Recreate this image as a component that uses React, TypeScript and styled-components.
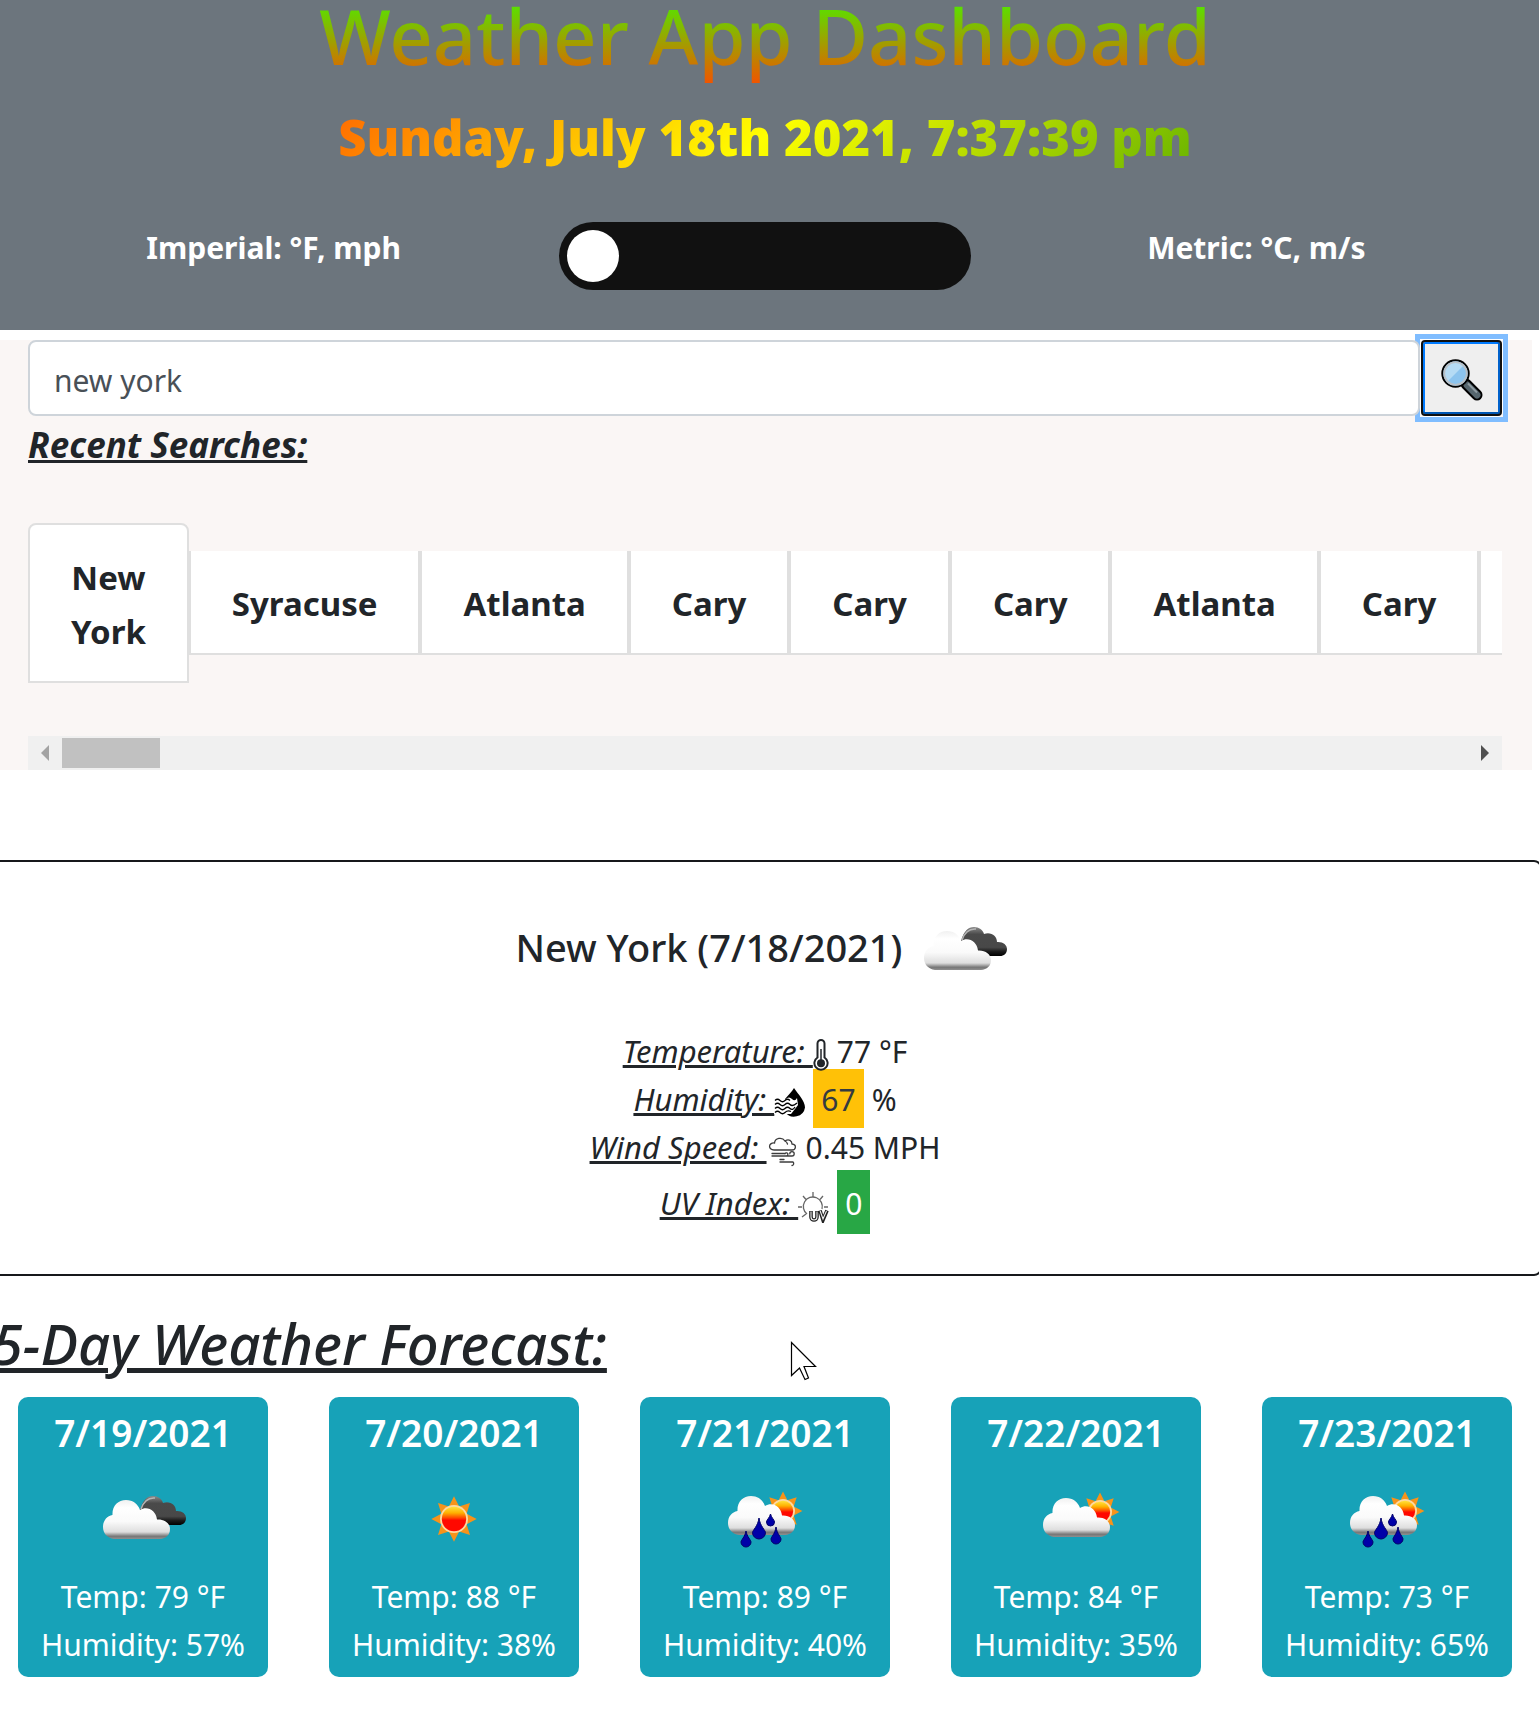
import React, { useId, useRef, useState } from 'react';
import styled, { createGlobalStyle, css } from 'styled-components';

const GlobalStyle = createGlobalStyle`
  *, *::before, *::after { box-sizing: border-box; }
  body {
    margin: 0;
    background: #fff;
    color: #212529;
    font-family: 'Segoe UI', 'Noto Sans', 'Open Sans', sans-serif;
    font-size: 30px;
    line-height: 48px;
  }
  h1, h2, h3, p, ul, dl, dd { margin: 0; padding: 0; }
  h1, h2, h3 { font-weight: 500; }
  button, input { font-family: inherit; }
`;

const Page = styled.div`
  position: relative;
  overflow-x: clip;
`;

/* ---------- header ---------- */

const Header = styled.header`
  padding: 0 37px 40px 28px;
  background: #6c757d;
  text-align: center;
`;

const gradientText = css`
  -webkit-background-clip: text;
  background-clip: text;
  color: transparent;
`;

const Title = styled.h1`
  padding-bottom: 16px;
  font-size: 76px;
  line-height: 72px;
  background-image: linear-gradient(#4eeb00, #fa4c00);
  ${gradientText}
`;

const Clock = styled.p`
  font-size: 49px;
  font-weight: 900;
  line-height: 98px;
  background-image: linear-gradient(135deg, red, yellow, green);
  ${gradientText}
`;

const UnitBar = styled.div`
  display: grid;
  grid-template-columns: repeat(3, 1fr);
  justify-items: center;
  margin-top: 36px;
`;

const UnitLabel = styled.label`
  color: #fff;
  font-weight: 700;
  line-height: 52px;
`;

const Switch = styled.input`
  appearance: none;
  width: 84%;
  height: 68px;
  margin: 0;
  padding: 8px;
  border-radius: 34px;
  background: #111;
  display: flex;
  cursor: pointer;

  &::before {
    content: '';
    width: 52px;
    height: 52px;
    border-radius: 50%;
    background: #fff;
  }

  &:checked { justify-content: flex-end; }
`;

/* ---------- search ---------- */

const SearchPanel = styled.section`
  margin: 10px 7px 0 0;
  padding: 0 30px 0 28px;
  background: #faf6f5;
`;

const SearchForm = styled.form`
  display: flex;
`;

const SearchInput = styled.input`
  position: relative;
  z-index: 1;
  flex: 1;
  min-width: 0;
  height: 76px;
  padding: 4px 24px 0;
  border: 2px solid #ced4da;
  border-radius: 8px;
  background: #fff;
  color: #495057;
  font-size: 30px;
  outline: none;
`;

const SearchButton = styled.button`
  position: relative;
  display: flex;
  align-items: center;
  justify-content: center;
  width: 81px;
  margin-left: 1px;
  padding: 4px 0 0;
  border: 2px solid #101010;
  border-radius: 4px;
  background: #efefef;
  box-shadow: inset 0 -2px #0056b3, inset -2px 0 #0062cc, inset 0 0 0 2px #007bff, 0 0 0 1px #fff;

  &::before {
    content: '';
    position: absolute;
    inset: -8px;
    border: 5px solid #80bdff;
  }
`;

const RecentTitle = styled.h2`
  font-size: 35px;
  font-style: italic;
  font-weight: 700;
  line-height: 58px;
  text-decoration: underline 3px;
  text-underline-offset: 2px;
`;

const RecentList = styled.ul`
  display: flex;
  align-items: center;
  margin: 49px 0 53px;
  overflow: hidden;
  list-style: none;
`;

const City = styled.button<{ $first?: boolean }>`
  display: block;
  width: min-content;
  padding: 26px 41px 22px;
  border: 2px solid #dfdfdf;
  border-top-width: ${p => (p.$first ? 2 : 0)}px;
  border-radius: ${p => (p.$first ? '8px 8px 0 0' : 0)};
  background: #fff;
  color: #212529;
  font-size: 33px;
  font-weight: 700;
  line-height: 54px;
`;

const ScrollTrack = styled.div`
  display: flex;
  align-items: center;
  height: 34px;
  background: #f0f0f0;
`;

const ScrollArrow = styled.button<{ $right?: boolean }>`
  display: flex;
  align-items: center;
  justify-content: center;
  width: 34px;
  height: 34px;
  margin-left: ${p => (p.$right ? 'auto' : 0)};
  padding: 0;
  border: 0;
  background: none;
  color: ${p => (p.$right ? '#505050' : '#a3a3a3')};
`;

const ScrollThumb = styled.div`
  width: 98px;
  height: 30px;
  background: #c1c1c1;
`;

/* ---------- current weather ---------- */

const Current = styled.section`
  margin: 90px -3px 0 -12px;
  padding: 38px 0 39px;
  border: 2px solid #16181b;
  border-radius: 8px;
`;

const CurrentHead = styled.div`
  display: flex;
  align-items: center;
  justify-content: center;
  gap: 12px;
  margin-bottom: 27px;
`;

const CityName = styled.h2`
  padding-bottom: 6px;
  font-size: 38px;
`;

const WeatherSvg = styled.svg`
  display: block;
  width: 100px;
  height: 100px;
`;

const Reading = styled.div<{ $tall?: boolean }>`
  display: flex;
  align-items: center;
  justify-content: center;
  height: ${p => (p.$tall ? 64 : 48)}px;
`;

const Term = styled.dt`
  font-size: 31px;
  font-style: italic;
  white-space: pre;
  text-decoration: underline 3px;
  text-underline-offset: 2px;
`;

const Value = styled.dd`
  display: flex;
  align-items: center;
  gap: 8px;
`;

const Figure = styled.span`
  padding-top: 2px;
`;

const ReadingSvg = styled.svg<{ $narrow?: boolean }>`
  position: relative;
  z-index: 1;
  width: ${p => (p.$narrow ? 16 : 31)}px;
  height: 32px;
  margin-top: 8px;
`;

const Badge = styled.span<{ $tone: 'warn' | 'good' }>`
  margin-bottom: 2px;
  padding: 3px 8px 0;
  line-height: ${p => (p.$tone === 'good' ? 61 : 56)}px;
  background: ${p => (p.$tone === 'good' ? '#28a745' : '#ffc107')};
  color: ${p => (p.$tone === 'good' ? '#fff' : '#343a40')};
`;

/* ---------- forecast ---------- */

const Forecast = styled.section`
  margin: 32px -3px 0 -12px;
  padding-bottom: 32px;
`;

const ForecastTitle = styled.h2`
  margin-bottom: 19px;
  padding-left: 4px;
  font-size: 56px;
  font-style: italic;
  line-height: 70px;
  text-decoration: underline 5px;
  text-underline-offset: 3px;
`;

const Days = styled.div`
  display: grid;
  grid-template-columns: repeat(5, 1fr);
  gap: 61px;
  padding: 0 30px;
`;

const Day = styled.article`
  display: flex;
  flex-direction: column;
  align-items: center;
  padding: 12px 0 8px;
  border-radius: 10px;
  background: #17a2b8;
  color: #fff;
  white-space: nowrap;
`;

const DayDate = styled.h3`
  font-size: 37px;
  font-weight: 600;
`;

const DayIcon = styled.div`
  margin: 12px 0 4px;
`;

const DayLine = styled.p`
  font-weight: 400;
`;

const Pointer = styled.svg`
  position: absolute;
  left: 790px;
  top: 1341px;
  width: 27px;
  height: 40px;
  pointer-events: none;
`;

/* ---------- drawings ---------- */

type Sky = 'clouds' | 'sun' | 'rain' | 'partly';

const spikes = (cx: number, cy: number, inner: number, outer: number) =>
  Array.from({ length: 8 }, (_, i) => {
    const a = (i * Math.PI) / 4;
    const point = (r: number, t: number) =>
      `${(cx + r * Math.cos(t)).toFixed(1)},${(cy + r * Math.sin(t)).toFixed(1)}`;
    return `M${point(outer, a)} L${point(inner, a + 0.36)} L${point(inner, a - 0.36)}Z`;
  }).join(' ');

function Sun({ id, cx, cy, r }: { id: string; cx: number; cy: number; r: number }) {
  return (
    <g>
      <linearGradient id={`${id}-s`} x1="0" y1="0" x2="0" y2="1">
        <stop offset="0" stopColor="#ffe23c" />
        <stop offset="0.25" stopColor="#ffb000" />
        <stop offset="0.45" stopColor="#ff4a00" />
        <stop offset="0.55" stopColor="#ff0800" />
        <stop offset="1" stopColor="#ff0800" />
      </linearGradient>
      <path d={spikes(cx, cy, r, r * 1.62)} fill="#f7931a" />
      <circle cx={cx} cy={cy} r={r} fill="#ffd9a0" />
      <circle cx={cx} cy={cy} r={r - 1.8} fill={`url(#${id}-s)`} />
    </g>
  );
}

function Cloud({ id, dx, dy }: { id: string; dx: number; dy: number }) {
  return (
    <g transform={`translate(${dx} ${dy})`}>
      <linearGradient id={`${id}-c`} gradientUnits="userSpaceOnUse" x1="0" y1="31" x2="0" y2="70">
        <stop offset="0" stopColor="#f1f1f1" />
        <stop offset="0.2" stopColor="#ffffff" />
        <stop offset="0.55" stopColor="#fafafa" />
        <stop offset="0.82" stopColor="#dedede" />
        <stop offset="0.87" stopColor="#b0b0b0" />
        <stop offset="0.93" stopColor="#777777" />
        <stop offset="1" stopColor="#8f8f8f" />
      </linearGradient>
      <path
        d="M21 70 C14 69 10 64 10 58 C10 51.500 14 47 19.500 46 C19 37 25 31 33 31 C40 31 45 35 47 41 C54 36.500 63 41 64 50.500 C71 50 77 54 77 60 C77 66 73 69.500 67 70 Z"
        fill={`url(#${id}-c)`}
      />
    </g>
  );
}

const drop = (x: number, top: number, bottom: number, w: number) => {
  const r = w / 2;
  const mid = bottom - r;
  return `M${x} ${top} C${x + 1} ${mid - r} ${x + r} ${mid - 2} ${x + r} ${mid} A${r} ${r} 0 0 1 ${x - r} ${mid} C${x - r} ${mid - 2} ${x - 1} ${mid - r} ${x} ${top}Z`;
};

const cloudShift: Record<Sky, [number, number]> = {
  clouds: [0, 0],
  sun: [0, 0],
  rain: [3, -4],
  partly: [7, -2],
};

function WeatherIcon({ sky, label }: { sky: Sky; label: string }) {
  const id = useId().replace(/[^a-zA-Z0-9]/g, '');
  return (
    <WeatherSvg viewBox="0 0 100 100" role="img" aria-label={label}>
      {sky === 'clouds' && (
        <g>
          <linearGradient id={`${id}-d`} gradientUnits="userSpaceOnUse" x1="0" y1="27" x2="0" y2="56">
            <stop offset="0" stopColor="#8a8a8a" />
            <stop offset="0.25" stopColor="#4a4a4a" />
            <stop offset="0.7" stopColor="#484848" />
            <stop offset="0.85" stopColor="#1a1a1a" />
            <stop offset="1" stopColor="#000000" />
          </linearGradient>
          <path
            d="M56 56 C50 54 44 46 47 41 C50 31 54 27 60 27 C65 27 69 30 70 34 C77 31.500 83 36 83 42 C89 41.500 93 45 93 49 C93 53.500 90 56 86 56 Z"
            fill={`url(#${id}-d)`}
          />
          <path d="M48 40 C51 31 56 28.500 62 29" fill="none" stroke="#b5b5b5" strokeWidth="1.500" />
        </g>
      )}
      {sky === 'sun' && <Sun id={id} cx={50} cy={50} r={14} />}
      {sky === 'rain' && <Sun id={id} cx={68} cy={42} r={12} />}
      {sky === 'partly' && <Sun id={id} cx={74} cy={43} r={12} />}
      {sky !== 'sun' && <Cloud id={id} dx={cloudShift[sky][0]} dy={cloudShift[sky][1]} />}
      {sky === 'rain' && (
        <path
          d={[drop(31, 62, 78, 10), drop(44, 49, 70, 13), drop(55.5, 45, 57, 8), drop(61, 58, 75, 10)].join(' ')}
          fill="#0000a8"
          stroke="#00006a"
          strokeWidth="1"
        />
      )}
    </WeatherSvg>
  );
}

function MagnifierIcon() {
  return (
    <svg width="42" height="42" viewBox="0 0 42 42" aria-hidden="true">
      <path d="M25 25 L36 36" stroke="#000" strokeWidth="11" strokeLinecap="round" />
      <path d="M26 26 L36 36" stroke="#56666e" strokeWidth="7" strokeLinecap="round" />
      <path d="M27 24.500 L36 33.500" stroke="#8e9ba1" strokeWidth="2" />
      <circle cx="14.500" cy="14.500" r="13.200" fill="#8cc4ee" stroke="#000" strokeWidth="2" />
      <path d="M6.500 22.500 A11.300 11.300 0 0 1 22.500 6.500 Z" fill="#b5dbf4" />
      <circle cx="14.500" cy="14.500" r="11.300" fill="none" stroke="#b9c0c6" strokeWidth="1.800" />
    </svg>
  );
}

const Thermometer = () => (
  <ReadingSvg $narrow viewBox="0 0 16 32" aria-hidden="true">
    <path d="M4.500 18.500 V4.500 a3.500 3.500 0 0 1 7 0 V18.500 a6.600 6.600 0 1 1 -7 0 Z" fill="#fff" stroke="#212529" strokeWidth="2" />
    <path d="M8 10 V24" stroke="#212529" strokeWidth="1.500" />
    <circle cx="8" cy="24.300" r="4" fill="#212529" />
  </ReadingSvg>
);

const HumidityIcon = () => (
  <ReadingSvg viewBox="0 0 31 32" aria-hidden="true">
    <path d="M20 1 C24 7 31 14 31 20.500 A11 10.500 0 0 1 11 25 L11 12 C14 8 18 5 20 1Z" fill="#000" />
    <path d="M0 12 q3 -3 6 0 t6 0 t6 0 t5 -1 L24 18 L21 22 L17 27 H0Z" fill="#fff" />
    <path
      d="M1 13.500 q2.500 -2.500 5 0 t5 0 t5 0 M1 17.500 q2.500 -2.500 5 0 t5 0 t5 0 t7 -1.500 M1 21.500 q2.500 -2.500 5 0 t5 0 t5 0 t5 -1.500 M1 25.500 q2.500 -2.500 5 0 t5 0 t6 -1"
      fill="none"
      stroke="#000"
      strokeWidth="1.300"
    />
  </ReadingSvg>
);

const WindIcon = () => (
  <ReadingSvg viewBox="0 0 31 32" aria-hidden="true">
    <g fill="none" stroke="#3c3c3c" strokeWidth="1.300" strokeLinecap="round">
      <path d="M7 15 C1 15 1 7.500 7.500 8 C8 3 15 1.500 18 6 C22 3.500 25 6 25 9 C30 9.500 29 15 25 15 Z M18 6 Q20 7 20.500 9" />
      <path d="M5 18.500 H18 M5 21 H25 a2.200 2.200 0 1 0 -2.200 -2.200 M19 20.800 a1.500 1.500 0 1 0 -1 -2 M13 24.500 H17 M13 27 H26 a2 2 0 0 1 -1 3.500 M16 27 H24" />
    </g>
  </ReadingSvg>
);

const UvIcon = () => (
  <ReadingSvg viewBox="0 0 31 32" aria-hidden="true">
    <g fill="none" stroke="#666" strokeWidth="1.300">
      <path d="M9 23 A9.500 9.500 0 1 1 24 18" />
      <path d="M15 1 V6 M5 5 L8 8.500 M25 5 L22 8.500 M0 16 H4 M26 16 H30 M4 26 L8 23" />
    </g>
    <path d="M13 20 V26 a3 3 0 0 0 6 0 V20 M22 19.500 L25 29 L29 19.500" fill="none" stroke="#222" strokeWidth="3.600" />
    <path d="M13 20.500 V26 a3 3 0 0 0 6 0 V20.500 M22.200 20 L25 28 L28.500 20" fill="none" stroke="#eee" strokeWidth="1.100" />
  </ReadingSvg>
);

/* ---------- page ---------- */

const cities = ['New York', 'Syracuse', 'Atlanta', 'Cary', 'Cary', 'Cary', 'Atlanta', 'Cary', 'Cary'];

const days: { date: string; sky: Sky; label: string; temp: number; humidity: number }[] = [
  { date: '7/19/2021', sky: 'clouds', label: 'Broken clouds', temp: 79, humidity: 57 },
  { date: '7/20/2021', sky: 'sun', label: 'Clear sky', temp: 88, humidity: 38 },
  { date: '7/21/2021', sky: 'rain', label: 'Rain', temp: 89, humidity: 40 },
  { date: '7/22/2021', sky: 'partly', label: 'Few clouds', temp: 84, humidity: 35 },
  { date: '7/23/2021', sky: 'rain', label: 'Rain', temp: 73, humidity: 65 },
];

export default function App() {
  const [query, setQuery] = useState('new york');
  const list = useRef<HTMLUListElement>(null);
  const scroll = (by: number) => list.current?.scrollBy({ left: by });

  return (
    <Page>
      <GlobalStyle />
      <Header>
        <Title>Weather App Dashboard</Title>
        <Clock>Sunday, July 18th 2021, 7:37:39 pm</Clock>
        <UnitBar>
          <UnitLabel htmlFor="units">Imperial: °F, mph</UnitLabel>
          <Switch id="units" type="checkbox" role="switch" />
          <UnitLabel htmlFor="units">Metric: °C, m/s</UnitLabel>
        </UnitBar>
      </Header>

      <SearchPanel>
        <SearchForm onSubmit={e => e.preventDefault()}>
          <SearchInput aria-label="City" value={query} onChange={e => setQuery(e.target.value)} />
          <SearchButton type="submit" aria-label="Search">
            <MagnifierIcon />
          </SearchButton>
        </SearchForm>
        <RecentTitle>Recent Searches:</RecentTitle>
        <RecentList ref={list}>
          {cities.map((city, i) => (
            <li key={i}>
              <City type="button" $first={i === 0} onClick={() => setQuery(city)}>
                {city}
              </City>
            </li>
          ))}
        </RecentList>
        <ScrollTrack>
          <ScrollArrow type="button" aria-label="Scroll left" onClick={() => scroll(-160)}>
            <svg width="8" height="16" viewBox="0 0 8 16"><path d="M8 0 V16 L0 8Z" fill="currentColor" /></svg>
          </ScrollArrow>
          <ScrollThumb />
          <ScrollArrow type="button" $right aria-label="Scroll right" onClick={() => scroll(160)}>
            <svg width="8" height="16" viewBox="0 0 8 16"><path d="M0 0 V16 L8 8Z" fill="currentColor" /></svg>
          </ScrollArrow>
        </ScrollTrack>
      </SearchPanel>

      <Current>
        <CurrentHead>
          <CityName>New York (7/18/2021)</CityName>
          <WeatherIcon sky="clouds" label="Broken clouds" />
        </CurrentHead>
        <dl>
          <Reading>
            <Term>{'Temperature: '}</Term>
            <Value><Thermometer /><Figure>77 °F</Figure></Value>
          </Reading>
          <Reading>
            <Term>{'Humidity: '}</Term>
            <Value><HumidityIcon /><Badge $tone="warn">67</Badge><Figure>%</Figure></Value>
          </Reading>
          <Reading>
            <Term>{'Wind Speed: '}</Term>
            <Value><WindIcon /><Figure>0.45 MPH</Figure></Value>
          </Reading>
          <Reading $tall>
            <Term>{'UV Index: '}</Term>
            <Value><UvIcon /><Badge $tone="good">0</Badge></Value>
          </Reading>
        </dl>
      </Current>

      <Forecast>
        <ForecastTitle>5-Day Weather Forecast:</ForecastTitle>
        <Days>
          {days.map(day => (
            <Day key={day.date}>
              <DayDate>{day.date}</DayDate>
              <DayIcon><WeatherIcon sky={day.sky} label={day.label} /></DayIcon>
              <DayLine>Temp: {day.temp} °F</DayLine>
              <DayLine>Humidity: {day.humidity}%</DayLine>
            </Day>
          ))}
        </Days>
      </Forecast>

      <Pointer viewBox="0 0 27 40" aria-hidden="true">
        <path d="M1.500 1.500 V34.500 L9.500 27 L15 38.500 L18.500 37 L14 25.500 H25.500 Z" fill="#fff" stroke="#000" strokeWidth="1.200" />
      </Pointer>
    </Page>
  );
}
